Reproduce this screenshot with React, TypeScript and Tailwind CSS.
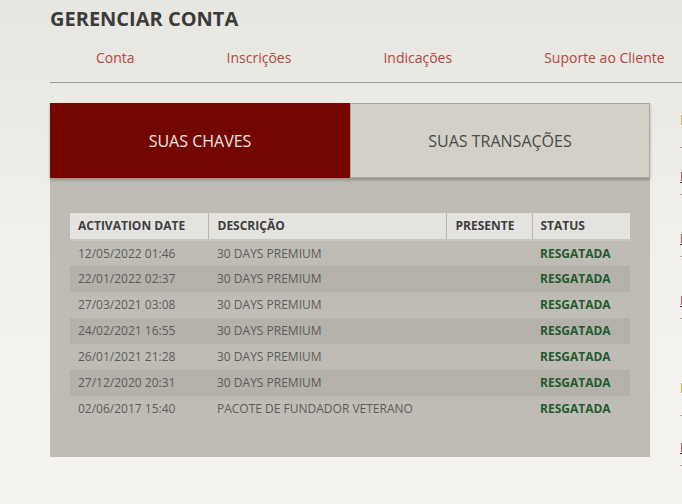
import React from 'react';

const ROWS = [
  { date: '12/05/2022 01:46', desc: '30 DAYS PREMIUM' },
  { date: '22/01/2022 02:37', desc: '30 DAYS PREMIUM' },
  { date: '27/03/2021 03:08', desc: '30 DAYS PREMIUM' },
  { date: '24/02/2021 16:55', desc: '30 DAYS PREMIUM' },
  { date: '26/01/2021 21:28', desc: '30 DAYS PREMIUM' },
  { date: '27/12/2020 20:31', desc: '30 DAYS PREMIUM' },
  { date: '02/06/2017 15:40', desc: 'PACOTE DE FUNDADOR VETERANO' },
];

const NAV = ['Conta', 'Inscrições', 'Indicações', 'Suporte ao Cliente'];

function SideLink({ pt }: { pt: string }) {
  return (
    <div className={pt}>
      <div className="text-[13px] leading-[16px] text-[#6b2a6b] underline">Link</div>
      <div className="text-[11px] leading-[14px] text-[#888] mt-[2px]">- item</div>
    </div>
  );
}

export default function App() {
  return (
    <div
      className="w-[682px] h-[504px] overflow-hidden bg-gradient-to-b from-[#e8e6e1] via-[#f1f0ec] to-[#f4f3f0] text-[#3a3a3a]"
      style={{ fontFamily: '"Open Sans", "Liberation Sans", sans-serif' }}
    >
      <div className="pl-[50px] pt-[6px]">
        <h1 className="text-[20px] leading-[26px] font-bold text-[#3b3b3b]">GERENCIAR CONTA</h1>
        <nav className="flex gap-[92px] pl-[46px] pt-[16px] pb-[14px] border-b border-[#9a9a9a] w-[700px]">
          {NAV.map((n) => (
            <a key={n} className="text-[14px] leading-[20px] text-[#b5473a] whitespace-nowrap">
              {n}
            </a>
          ))}
        </nav>

        <div className="flex mt-[20px]">
          <section className="w-[600px] shrink-0 h-[354px] bg-[#bfbcb5] flex flex-col">
            <div className="flex h-[75px] shadow-[0_2px_3px_rgba(0,0,0,0.25)] relative">
              <div className="w-[300px] bg-[#730700] flex items-center justify-center text-[16px] text-[#f3e6e3]">
                SUAS CHAVES
              </div>
              <div className="w-[300px] bg-[#d3d0c8] border border-[#a9a7a2] flex items-center justify-center text-[16px] text-[#4a4a4a]">
                SUAS TRANSAÇÕES
              </div>
            </div>
            <div className="px-[20px] pt-[35px]">
              <table className="w-[560px] border-collapse text-[12px]">
                <thead>
                  <tr className="bg-[#e4e3e0] h-[27px] text-left font-bold text-[#3e3e3e] border-b-2 border-[#c9c7c2]">
                    <th className="w-[138px] pl-[8px] border-r border-[#b8b6b0]">ACTIVATION DATE</th>
                    <th className="w-[238px] pl-[9px] border-r border-[#b8b6b0]">DESCRIÇÃO</th>
                    <th className="w-[86px] pl-[9px] border-r border-[#b8b6b0]">PRESENTE</th>
                    <th className="pl-[8px]">STATUS</th>
                  </tr>
                </thead>
                <tbody>
                  {ROWS.map((r, i) => (
                    <tr key={i} className={`h-[26px] ${i % 2 === 1 ? 'bg-[#b4b1aa]' : ''}`}>
                      <td className="pl-[8px] text-[#5c5c5c]">{r.date}</td>
                      <td className="pl-[9px] text-[#5c5c5c]">{r.desc}</td>
                      <td></td>
                      <td className="pl-[8px] font-bold text-[#1f5a30]">RESGATADA</td>
                    </tr>
                  ))}
                </tbody>
              </table>
            </div>
          </section>

          <aside className="ml-[30px] w-[200px] shrink-0">
            <div className="mt-[8px] text-[15px] leading-[16px] font-bold text-[#c9a24a]">Info</div>
            <div className="text-[11px] leading-[14px] text-[#888] mt-[12px]">- item</div>
            <SideLink pt="pt-[15px]" />
            <SideLink pt="pt-[30px]" />
            <SideLink pt="pt-[30px]" />
            <div className="mt-[55px] text-[15px] leading-[16px] font-bold text-[#c9a24a]">Info</div>
            <div className="text-[11px] leading-[14px] text-[#888] mt-[12px]">- item</div>
            <SideLink pt="pt-[18px]" />
            <SideLink pt="pt-[30px]" />
          </aside>
        </div>
      </div>
    </div>
  );
}
